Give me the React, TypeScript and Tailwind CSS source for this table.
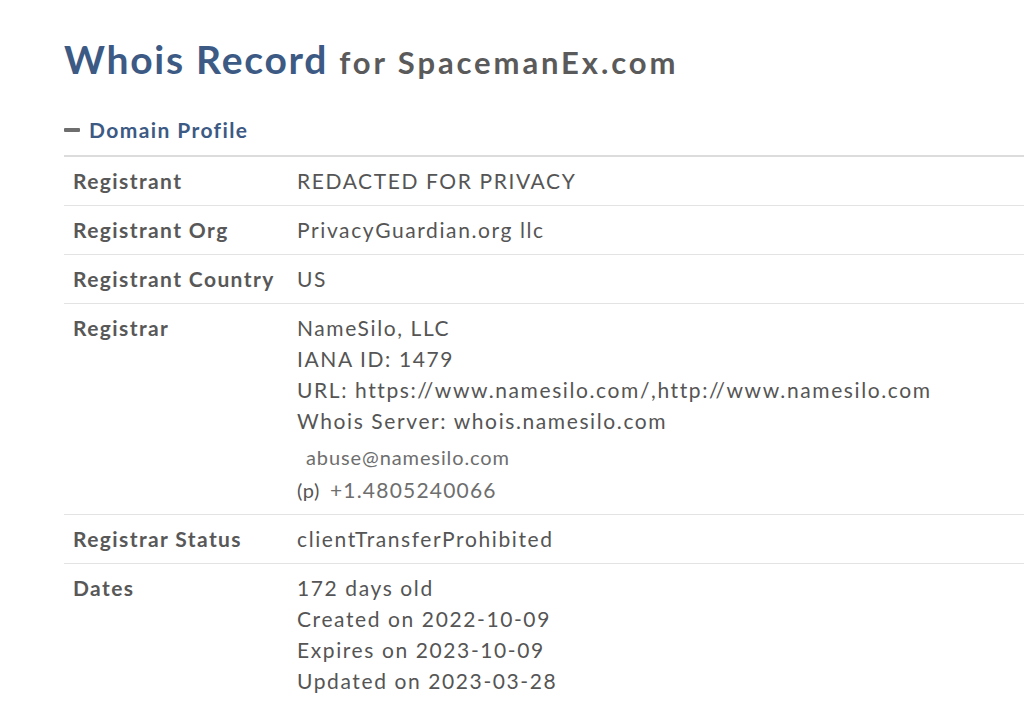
type Row = { label: string; values: React.ReactNode[] };

const rows: Row[] = [
  { label: 'Registrant', values: ['REDACTED FOR PRIVACY'] },
  { label: 'Registrant Org', values: ['PrivacyGuardian.org llc'] },
  { label: 'Registrant Country', values: ['US'] },
  {
    label: 'Registrar',
    values: [
      'NameSilo, LLC',
      'IANA ID: 1479',
      'URL: https://www.namesilo.com/,http://www.namesilo.com',
      'Whois Server: whois.namesilo.com',
    ],
  },
  { label: 'Registrar Status', values: ['clientTransferProhibited'] },
  {
    label: 'Dates',
    values: ['172 days old', 'Created on 2022-10-09', 'Expires on 2023-10-09', 'Updated on 2023-03-28'],
  },
];

// contact details are shown as a small image on the real page
function ContactLines() {
  return (
    <div className="text-[#6e6e6e] tracking-normal">
      <div className="h-[38px] pl-[9px] pt-[6px] text-[20px] leading-[31px] tracking-[0.9px]">abuse@namesilo.com</div>
      <div className="flex items-baseline h-[31px]">
        <span className="text-[20px] text-[#555] tracking-[0.6px]">(p)</span>
        <span className="ml-[10px] text-[21px] tracking-[1.2px]">+1.4805240066</span>
      </div>
    </div>
  );
}

export default function App() {
  return (
    <div className="min-h-[705px] bg-white overflow-hidden font-['Lato',sans-serif] pl-[64px] pt-[33px]">
      <h1 className="font-bold leading-[52px] whitespace-nowrap">
        <span className="text-[39px] text-[#3c5a84] tracking-[1.75px]">Whois Record</span>
        <span className="text-[31px] text-[#5a5a5a] ml-[11px] tracking-[2.9px]">for SpacemanEx.com</span>
      </h1>

      <div className="flex items-center mt-[22px] h-[28px]">
        <span className="block w-[16px] h-[4px] bg-[#6e6e6e] rounded-[1px]" />
        <span className="ml-[9px] text-[21px] font-bold text-[#3c5a84] tracking-[1.4px]">Domain Profile</span>
      </div>

      <table className="mt-[11px] w-[1000px] border-t-2 border-[#dcdcdc] border-collapse">
        <tbody>
          {rows.map((row) => (
            <tr key={row.label} className="border-b border-[#e3e3e3] align-top">
              <td className="w-[233px] pl-[9px] pt-[8px] pb-[9px] text-[21px] leading-[31px] font-bold text-[#585858] tracking-[1.4px] whitespace-nowrap">
                {row.label}
              </td>
              <td className="pt-[8px] pb-[9px] text-[21px] leading-[31px] text-[#555] tracking-[1.6px] whitespace-nowrap">
                {row.values.map((v, i) => (
                  <div key={i}>{v}</div>
                ))}
                {row.label === 'Registrar' && <ContactLines />}
              </td>
            </tr>
          ))}
        </tbody>
      </table>
    </div>
  );
}
